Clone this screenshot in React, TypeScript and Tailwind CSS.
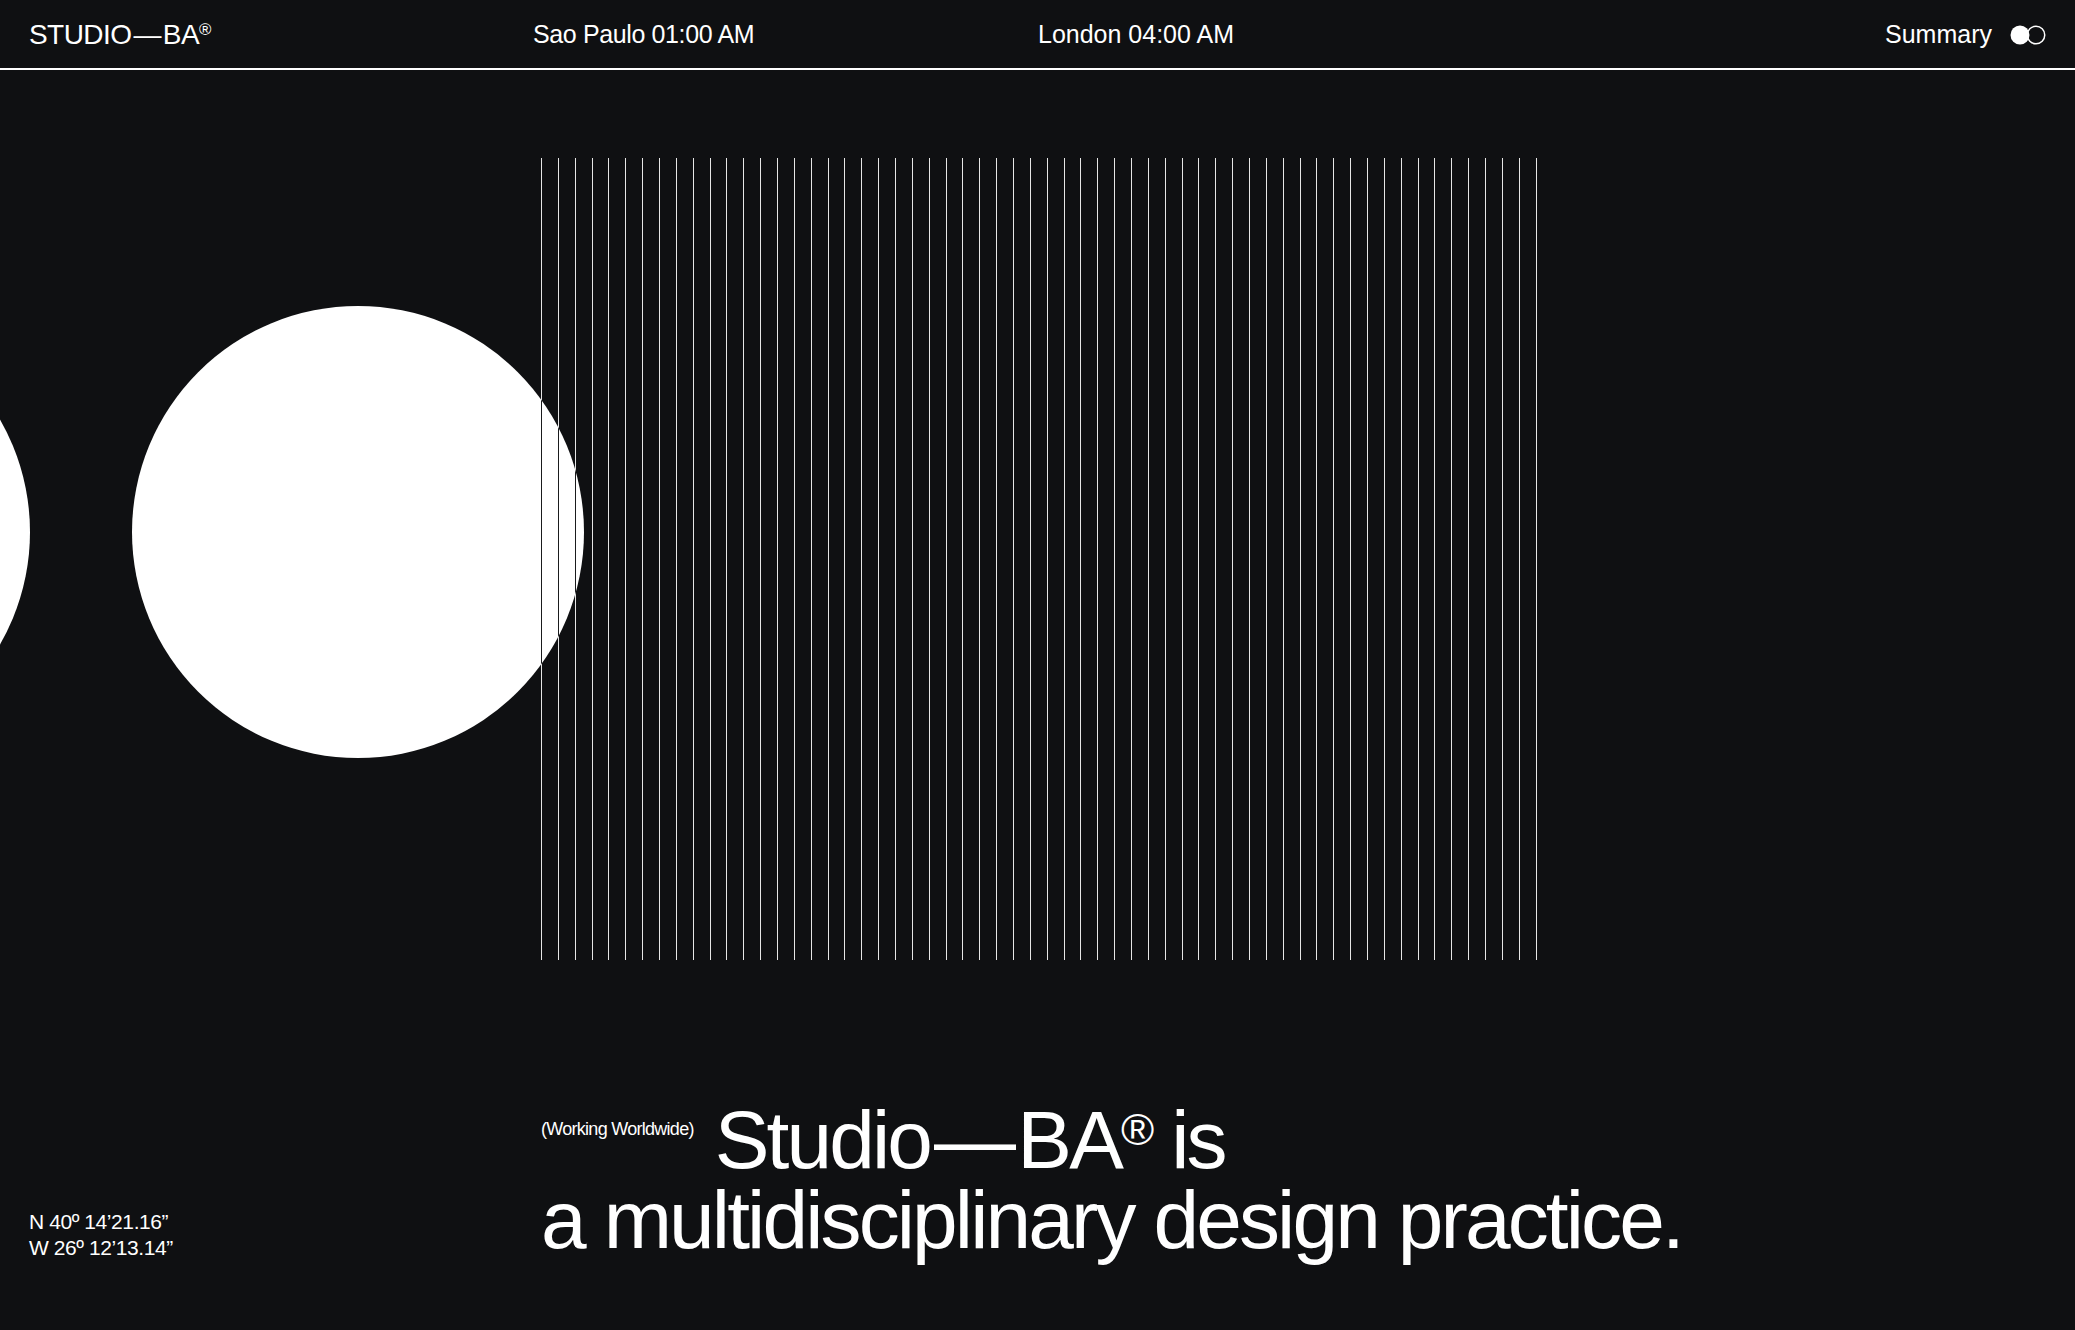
import React from 'react';

const lineXs = Array.from({ length: 60 }, (_, i) => Math.round(541 + i * 16.856) + 0.5);

const ToggleIcon: React.FC = () => (
  <svg width="36" height="20" viewBox="0 0 36 20" fill="none">
    <circle cx="26" cy="10" r="8.75" stroke="white" strokeWidth="1.5" />
    <circle cx="10" cy="10" r="9.5" fill="white" />
  </svg>
);

const Artwork: React.FC = () => (
  <svg width="1540" height="890" viewBox="0 0 1540 890" className="block shrink-0">
    <defs>
      <clipPath id="disc">
        <circle cx="358" cy="462" r="226" />
      </clipPath>
    </defs>
    <circle cx="-196" cy="462" r="226" fill="white" />
    <circle cx="358" cy="462" r="226" fill="white" />
    {lineXs.map((x) => (
      <line key={x} x1={x} y1="88" x2={x} y2="890" stroke="#e6e6e6" strokeWidth="1" />
    ))}
    {/* lines crossing the disc turn dark */}
    <g clipPath="url(#disc)">
      {lineXs.map((x) => (
        <line key={x} x1={x} y1="88" x2={x} y2="890" stroke="#1a1b1d" strokeWidth="1" />
      ))}
    </g>
  </svg>
);

const App: React.FC = () => {
  return (
    <div className="h-screen w-full overflow-hidden bg-[#0f1012] text-white flex flex-col font-['Liberation_Sans',Arial,sans-serif]">
      {/* Header */}
      <header className="h-[70px] shrink-0 border-b-2 border-white flex items-center px-[29px] pt-[2px]">
        <div className="w-[504px] shrink-0 text-[28px] tracking-[-0.02em]">
          STUDIO<span className="mx-[0.07em]">—</span>BA
          <span className="text-[0.6em] align-[0.55em] leading-none">®</span>
        </div>
        <div className="w-[505px] shrink-0 text-[25px] tracking-[-0.015em]">Sao Paulo 01:00 AM</div>
        <div className="text-[25px]">London 04:00 AM</div>
        <div className="ml-auto flex items-center gap-[18px]">
          <span className="text-[25px]">Summary</span>
          <ToggleIcon />
        </div>
      </header>

      <Artwork />

      {/* Intro */}
      <div className="mt-auto flex items-end pl-[29px] pb-[70px]">
        <div className="w-[512px] shrink-0 mb-[-1px] text-[21px] leading-[26px] tracking-[-0.02em]">
          <p>N 40º 14’21.16”</p>
          <p>W 26º 12’13.14”</p>
        </div>
        <div className="text-[82px] leading-[80px] tracking-[-0.035em]">
          <div className="flex items-start">
            <span className="mt-[18px] mr-[21px] text-[18px] leading-[22px] tracking-[-0.04em]">
              (Working Worldwide)
            </span>
            <span>
              Studio<span className="mx-[0.05em]">—</span>BA
              <span className="text-[0.55em] align-[0.5em] leading-none">®</span> is
            </span>
          </div>
          <div>a multidisciplinary design practice.</div>
        </div>
      </div>
    </div>
  );
};

export default App;
